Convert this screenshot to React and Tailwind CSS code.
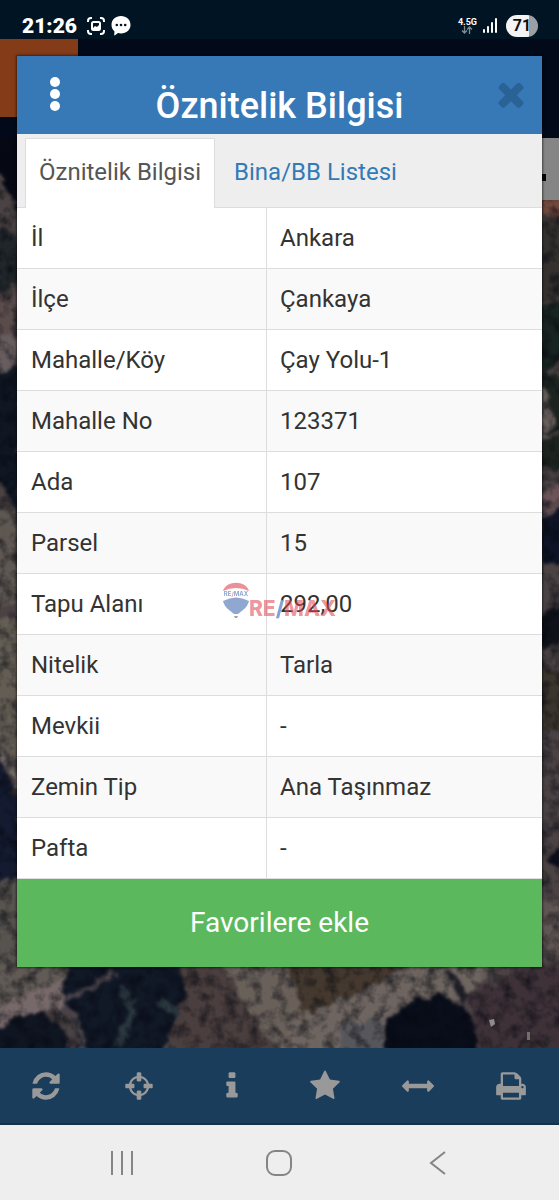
import React, { useState } from 'react';

const properties = [
  { label: 'İl', value: 'Ankara' },
  { label: 'İlçe', value: 'Çankaya' },
  { label: 'Mahalle/Köy', value: 'Çay Yolu-1' },
  { label: 'Mahalle No', value: '123371' },
  { label: 'Ada', value: '107' },
  { label: 'Parsel', value: '15' },
  { label: 'Tapu Alanı', value: '292,00' },
  { label: 'Nitelik', value: 'Tarla' },
  { label: 'Mevkii', value: '-' },
  { label: 'Zemin Tip', value: 'Ana Taşınmaz' },
  { label: 'Pafta', value: '-' },
];

const icons = {
  refresh:
    'M1639 1056q0 5-1 7-64 268-268 434.5t-478 166.5q-146 0-282.5-55t-243.5-157l-129 129q-19 19-45 19t-45-19-19-45v-448q0-26 19-45t45-19h448q26 0 45 19t19 45-19 45l-137 137q71 66 161 102t187 36q134 0 250-65t186-179q11-17 53-117 8-23 30-23h192q13 0 22.5 9.5t9.5 22.5zm25-800v448q0 26-19 45t-45 19h-448q-26 0-45-19t-19-45 19-45l138-138q-148-137-349-137-134 0-250 65t-186 179q-11 17-53 117-8 23-30 23h-199q-13 0-22.5-9.5t-9.5-22.5v-7q65-268 270-434.5t480-166.5q146 0 284 55.5t245 156.5l130-129q19-19 45-19t45 19 19 45z',
  crosshairs:
    'M1325 1024h-109q-26 0-45-19t-19-45v-128q0-26 19-45t45-19h109q-32-108-112.5-188.5t-188.5-112.5v109q0 26-19 45t-45 19h-128q-26 0-45-19t-19-45v-109q-108 32-188.5 112.5t-112.5 188.5h109q26 0 45 19t19 45v128q0 26-19 45t-45 19h-109q32 108 112.5 188.5t188.5 112.5v-109q0-26 19-45t45-19h128q26 0 45 19t19 45v109q108-32 188.5-112.5t112.5-188.5zm339-192v128q0 26-19 45t-45 19h-143q-37 161-154.5 278.5t-278.5 154.5v143q0 26-19 45t-45 19h-128q-26 0-45-19t-19-45v-143q-161-37-278.5-154.5t-154.5-278.5h-143q-26 0-45-19t-19-45v-128q0-26 19-45t45-19h143q37-161 154.5-278.5t278.5-154.5v-143q0-26 19-45t45-19h128q26 0 45 19t19 45v143q161 37 278.5 154.5t154.5 278.5h143q26 0 45 19t19 45z',
  info:
    'M1216 1344v128q0 26-19 45t-45 19h-512q-26 0-45-19t-19-45v-128q0-26 19-45t45-19h64v-384h-64q-26 0-45-19t-19-45v-128q0-26 19-45t45-19h384q26 0 45 19t19 45v576h64q26 0 45 19t19 45zm-128-1152v192q0 26-19 45t-45 19h-256q-26 0-45-19t-19-45v-192q0-26 19-45t45-19h256q26 0 45 19t19 45z',
  star:
    'M1728 647q0 22-26 48l-363 354 86 500q1 7 1 20 0 21-10.5 35.5t-30.5 14.5q-19 0-40-12l-449-236-449 236q-22 12-40 12-21 0-31.5-14.5t-10.5-35.5q0-6 2-20l86-500-364-354q-25-27-25-48 0-37 56-46l502-73 225-455q19-41 49-41t49 41l225 455 502 73q56 9 56 46z',
  measure:
    'M1792 896q0 26-19 45l-256 256q-19 19-45 19t-45-19-19-45v-128h-1024v128q0 26-19 45t-45 19-45-19l-256-256q-19-19-19-45t19-45l256-256q19-19 45-19t45 19 19 45v128h1024v-128q0-26 19-45t45-19 45 19l256 256q19 19 19 45z',
  print:
    'M448 1536h896v-256h-896v256zm0-640h896v-384h-160q-40 0-68-28t-28-68v-160h-640v640zm1152 64q0-26-19-45t-45-19-45 19-19 45 19 45 45 19 45-19 19-45zm128 0v416q0 13-9.5 22.5t-22.5 9.5h-224v160q0 40-28 68t-68 28h-960q-40 0-68-28t-28-68v-160h-224q-13 0-22.5-9.5t-9.5-22.5v-416q0-79 56.5-135.5t135.5-56.5h64v-544q0-40 28-68t68-28h672q40 0 88 20t76 48l152 152q28 28 48 76t20 88v256h64q79 0 135.5 56.5t56.5 135.5z',
  close:
    'M1490 1322q0 40-28 68l-136 136q-28 28-68 28t-68-28l-294-294-294 294q-28 28-68 28t-68-28l-136-136q-28-28-28-68t28-68l294-294-294-294q-28-28-28-68t28-68l136-136q28-28 68-28t68 28l294 294 294-294q28-28 68-28t68 28l136 136q28 28 28 68t-28 68l-294 294 294 294q28 28 28 68z',
};

const tools = [
  { icon: 'refresh', label: 'Yenile' },
  { icon: 'crosshairs', label: 'Konum' },
  { icon: 'info', label: 'Bilgi' },
  { icon: 'star', label: 'Favoriler' },
  { icon: 'measure', label: 'Ölçüm' },
  { icon: 'print', label: 'Yazdır' },
];

const Icon = ({ name, className }) => (
  <svg viewBox="0 0 1792 1792" fill="currentColor" className={className} aria-hidden="true">
    <path d={icons[name]} />
  </svg>
);

const StatusBar = () => (
  <div className="relative flex h-[39px] items-center justify-between bg-[#001423] pt-4 pr-[21px] pb-1 pl-[22px] text-white">
    <div className="flex items-center gap-[5px]">
      <span className="mr-1 text-[21px] leading-6 font-black">21:26</span>
      <svg viewBox="0 0 20 20" className="h-5 w-5" fill="none" stroke="currentColor" strokeWidth="2">
        <path d="M2 6V5q0-3 3-3h1M14 2h1q3 0 3 3v1M18 14v1q0 3-3 3h-1M6 18H5q-3 0-3-3v-1" />
        <rect x="6" y="6" width="8" height="8" rx="1.5" />
        <path d="M7 12l2-2 2 1 2-2v4H7z" fill="currentColor" stroke="none" />
      </svg>
      <svg viewBox="0 0 20 20" className="h-5 w-5">
        <path d="M10 0c5.500 0 9.500 3.500 9.500 8.800s-4 8.700-9.500 8.700q-1.500 0-3-.4L4 19.300q-.8.400-.8-.6l.3-3.200Q.5 13 .5 8.800C.5 3.500 4.500 0 10 0z" fill="#fff" />
        <g fill="#001423">
          <circle cx="5.800" cy="9" r="1.300" />
          <circle cx="10" cy="9" r="1.300" />
          <circle cx="14.200" cy="9" r="1.300" />
        </g>
      </svg>
    </div>
    <div className="flex items-center">
      <div className="flex flex-col items-center">
        <span className="text-[9px] leading-2 font-bold">4.5G</span>
        <svg viewBox="0 0 12 8" className="h-2 w-3" fill="none" stroke="#7f8b94" strokeWidth="1.3">
          <path d="M3.500 0v7M1 4.500l2.500 2.500 2.500-2.500M8.500 8V1M6 3.500L8.500 1 11 3.500" />
        </svg>
      </div>
      <svg viewBox="0 0 15 15" className="ml-[6px] h-[15px] w-[15px]" fill="#fff">
        <rect x="0" y="11" width="2" height="4" rx="1" />
        <rect x="4" y="8" width="2" height="7" rx="1" />
        <rect x="8" y="4" width="2" height="11" rx="1" />
        <rect x="12" y="0" width="2" height="15" rx="1" />
      </svg>
      <span className="ml-2 flex h-[22px] w-8 items-center justify-center rounded-full bg-linear-to-r from-[#f4f4f4] from-72% to-[#9ba0a5] to-72% text-[16px] font-bold text-[#111]">
        71
      </span>
    </div>
  </div>
);

// Dimmed aerial photo behind the dialog
const MapBackground = () => (
  <svg
    viewBox="0 39 559 1009"
    preserveAspectRatio="none"
    className="absolute inset-0 h-full w-full"
    aria-hidden="true"
  >
    <defs>
      <filter id="soft" x="-5%" y="-5%" width="110%" height="110%" colorInterpolationFilters="sRGB">
        <feTurbulence type="fractalNoise" baseFrequency="0.09" numOctaves="3" seed="8" result="noise" />
        <feDisplacementMap in="SourceGraphic" in2="noise" scale="14" xChannelSelector="R" yChannelSelector="G" result="rough" />
        <feGaussianBlur in="rough" stdDeviation="1.5" />
      </filter>
      <filter id="grain" x="0" y="0" width="100%" height="100%" colorInterpolationFilters="sRGB">
        <feTurbulence type="fractalNoise" baseFrequency="0.08" numOctaves="3" seed="3" />
        <feColorMatrix values="0 0 0 0 0.02  0 0 0 0 0.03  0 0 0 0 0.06  2.200 0 0 0 -0.900" />
      </filter>
    </defs>
    <rect y="39" width="559" height="1009" fill="#4a4243" />
    <g filter="url(#soft)">
      {/* left edge */}
      <path d="M-20 100h60v130L20 215 0 172h-20z" fill="#060914" />
      <path d="M-20 225l40 10v50l-40 10z" fill="#20262a" />
      <path d="M-20 300l40-10v50l-40 15z" fill="#5b4c4c" />
      <path d="M-20 350l40-20v35l-40 15z" fill="#675c5e" />
      <path d="M-20 378l40-12v150L0 480h-20z" fill="#101723" />
      <path d="M-20 490l40 30v85h-40z" fill="#5f5852" />
      <path d="M-20 625l40-10v150l-40-40z" fill="#645d54" />
      <path d="M-20 755L0 758l20 45v75l-40 10z" fill="#141b30" />
      <path d="M0 750l20 42" stroke="#7b7370" strokeWidth="4" />
      <path d="M-20 895l40-20v95h-40z" fill="#57534e" />
      {/* right edge */}
      <path d="M540 198h30v22l-30-4z" fill="#70483c" />
      <path d="M540 222l30-10v80l-30 15z" fill="#35312f" />
      <path d="M540 310l30-15v60l-30 20z" fill="#182421" />
      <path d="M540 365l30 20v90l-30-10z" fill="#1d2420" />
      <path d="M542 388l12 35-12 10zM540 438l30-8" fill="#6a605d" stroke="#6a605d" strokeWidth="4" />
      <path d="M540 495l30-15v22l-30 15z" fill="#6b5358" />
      <path d="M540 520l30-15v60h-30z" fill="#0e1426" />
      <path d="M540 655v-38l30-15v35z" fill="#10121a" />
      <path d="M540 670h30v60h-30z" fill="#3a352d" />
      <path d="M545 860l25-20v28l-20-4z" fill="#0b0e1b" />
      <path d="M540 900h30v60h-30z" fill="#5f5552" />
      {/* strip below the dialog */}
      <path d="M-10 965h85l-10 25-35 20-50 10z" fill="#615a55" />
      <path d="M-10 1010l35-15 40-15v25l-30 10-45 15z" fill="#77696a" />
      <path d="M70 960h115l5 30-20 40-10 35H80l-5-40-12-30z" fill="#111826" />
      <path d="M-10 1038l25-22 30-4 20 20 5 30h-80z" fill="#101522" />
      <path d="M64 1005l15 15 5 40M66 1000l50-28" fill="none" stroke="#4c444b" strokeWidth="5" />
      <path d="M122 985l10 25-15 40M160 1000l22 20" fill="none" stroke="#2a383f" strokeWidth="9" />
      <path d="M180 960h45l60 100h-95l-20-25 15-40z" fill="#4a3e3e" />
      <path d="M220 960h75l15 60-15 45-32-30z" fill="#69605a" />
      <path d="M285 960h125l-60 40-45 20z" fill="#45392f" />
      <path d="M290 1022l95-42 35-20h80l-30 35-60 20-20 50h-110z" fill="#6e6560" />
      <path d="M340 1025l40-5 6 40h-45z" fill="#57565b" />
      <path d="M470 995l60-30h40v100H470z" fill="#3e3138" />
      <path d="M385 1020l30-20 30-5 20 15 13 30-5 20h-88z" fill="#090e1a" />
      <path d="M450 970l14 30" fill="none" stroke="#23222a" strokeWidth="8" />
    </g>
    <rect y="39" width="559" height="1009" filter="url(#grain)" opacity="0.6" />
    <path d="M0 39h559v99H0z" fill="#020918" />
    <path d="M0 39h78v78H0z" fill="#843b17" />
    <path d="M541 138h18v62h-18z" fill="#858585" />
    <path d="M535 174h11v7h-11z" fill="#050505" />
    <path d="M489 1020l5-1 1 5-4 3z" fill="#918c8c" />
    <path d="M527 1032h3v8h-3z" fill="#756d6d" />
  </svg>
);

const Watermark = () => (
  <div className="pointer-events-none absolute inset-0 flex items-center justify-center opacity-55">
    <svg viewBox="0 0 26 36" className="h-9 w-[26px]" aria-hidden="true">
      <path d="M0 9C3-2 23-2 26 9Q13 3 0 9z" fill="#dc3545" />
      <path d="M0 19q13-7 26 0-1 5-6 9l-5 4h-4l-5-4q-5-4-6-9z" fill="#3460ad" />
      <path d="M11 34h4l-1 2h-2z" fill="#555" />
      <text x="13" y="14" textAnchor="middle" fontFamily="Inter" fontSize="6" fontWeight="700" fill="#3460ad">
        RE<tspan fill="#dc3545">/</tspan>MAX
      </text>
    </svg>
    <span className="pt-[18px] font-[Inter,sans-serif] text-[21px] leading-6 font-extrabold text-[#e04450]">
      RE<span className="text-[#1e56b0]">/</span>MAX
    </span>
  </div>
);

const AttributeDialog = () => {
  const [tab, setTab] = useState('info');

  return (
    <div
      role="dialog"
      aria-labelledby="dialog-title"
      className="relative bg-white shadow-[0_0_2px_1px_rgba(0,0,0,0.5)]"
    >
      {/* Header */}
      <div className="flex h-[78px] justify-between bg-[#3779b7] px-3">
        <button type="button" aria-label="Menü" className="flex h-[76px] w-[52px] items-center justify-center text-white">
          <svg viewBox="0 0 10 34" className="h-[34px] w-[10px]" fill="currentColor">
            <circle cx="5" cy="5" r="5" />
            <circle cx="5" cy="17" r="5" />
            <circle cx="5" cy="29" r="5" />
          </svg>
        </button>
        <h1 id="dialog-title" className="pt-[29px] text-[36px] leading-[42px] font-medium text-white">
          Öznitelik Bilgisi
        </h1>
        <button type="button" aria-label="Kapat" className="flex h-[76px] w-[52px] items-center justify-end text-[#2a6296]">
          <Icon name="close" className="h-[38px] w-[38px] shrink-0" />
        </button>
      </div>

      {/* Tabs */}
      <div role="tablist" className="flex h-[74px] border-b border-[#ddd] bg-[#eee] pt-1 pl-2 text-[24px]">
        <button
          type="button"
          role="tab"
          aria-selected={tab === 'info'}
          onClick={() => setTab('info')}
          className="-mb-px border border-b-0 border-[#ddd] bg-white px-[13px] pb-[3px] text-[#555]"
        >
          Öznitelik Bilgisi
        </button>
        <button
          type="button"
          role="tab"
          aria-selected={tab === 'buildings'}
          onClick={() => setTab('buildings')}
          className="px-[19px] pb-px text-[#337ab7]"
        >
          Bina/BB Listesi
        </button>
      </div>

      {/* Attributes */}
      <table className="w-full table-fixed border-separate border-spacing-0 text-left text-[24px] leading-8 text-[#333]">
        <tbody>
          {properties.map((item) => (
            <tr key={item.label} className="h-[61px] even:bg-[#f9f9f9]">
              <th scope="row" className="w-[250px] border-r border-b border-[#ddd] pl-[14px] font-normal">
                {item.label}
              </th>
              <td className="border-b border-[#ddd] pl-[13px]">{item.value}</td>
            </tr>
          ))}
        </tbody>
      </table>

      <button type="button" className="block h-[88px] w-full bg-[#5cb85c] text-[28px] text-white">
        Favorilere ekle
      </button>
    </div>
  );
};

const Toolbar = () => (
  <div className="relative grid h-[77px] grid-cols-6 border-b-2 border-[#15324c] bg-[#1b3d5c] pr-[2px] text-[#999]">
    {tools.map((tool) => (
      <button key={tool.icon} type="button" aria-label={tool.label} className="flex items-center justify-center">
        <Icon name={tool.icon} className="h-8 w-8" />
      </button>
    ))}
  </div>
);

const NavigationBar = () => (
  <div className="relative flex h-[75px] items-center justify-around bg-[#eee] px-11 text-[#858585]">
    <button type="button" aria-label="Son uygulamalar" className="p-2">
      <svg viewBox="0 0 24 24" className="h-6 w-6" fill="none" stroke="currentColor" strokeWidth="2">
        <path d="M2 0v24M12 0v24M22 0v24" />
      </svg>
    </button>
    <button type="button" aria-label="Ana ekran" className="p-2">
      <svg viewBox="0 0 26 26" className="h-[26px] w-[26px]" fill="none" stroke="currentColor" strokeWidth="2">
        <rect x="1" y="1" width="24" height="24" rx="8" />
      </svg>
    </button>
    <button type="button" aria-label="Geri" className="p-2">
      <svg viewBox="0 0 24 24" className="h-6 w-6" fill="none" stroke="currentColor" strokeWidth="2">
        <path d="M20 1L6 12l14 11" />
      </svg>
    </button>
  </div>
);

const App = () => {
  return (
    <div className="relative flex min-h-screen flex-col bg-[#020918] font-[Roboto,sans-serif]">
      <StatusBar />
      <main className="relative flex-1 px-[17px] pt-[17px] pb-[81px]">
        <MapBackground />
        <AttributeDialog />
      </main>
      <Toolbar />
      <NavigationBar />
      <Watermark />
    </div>
  );
};

export default App;
